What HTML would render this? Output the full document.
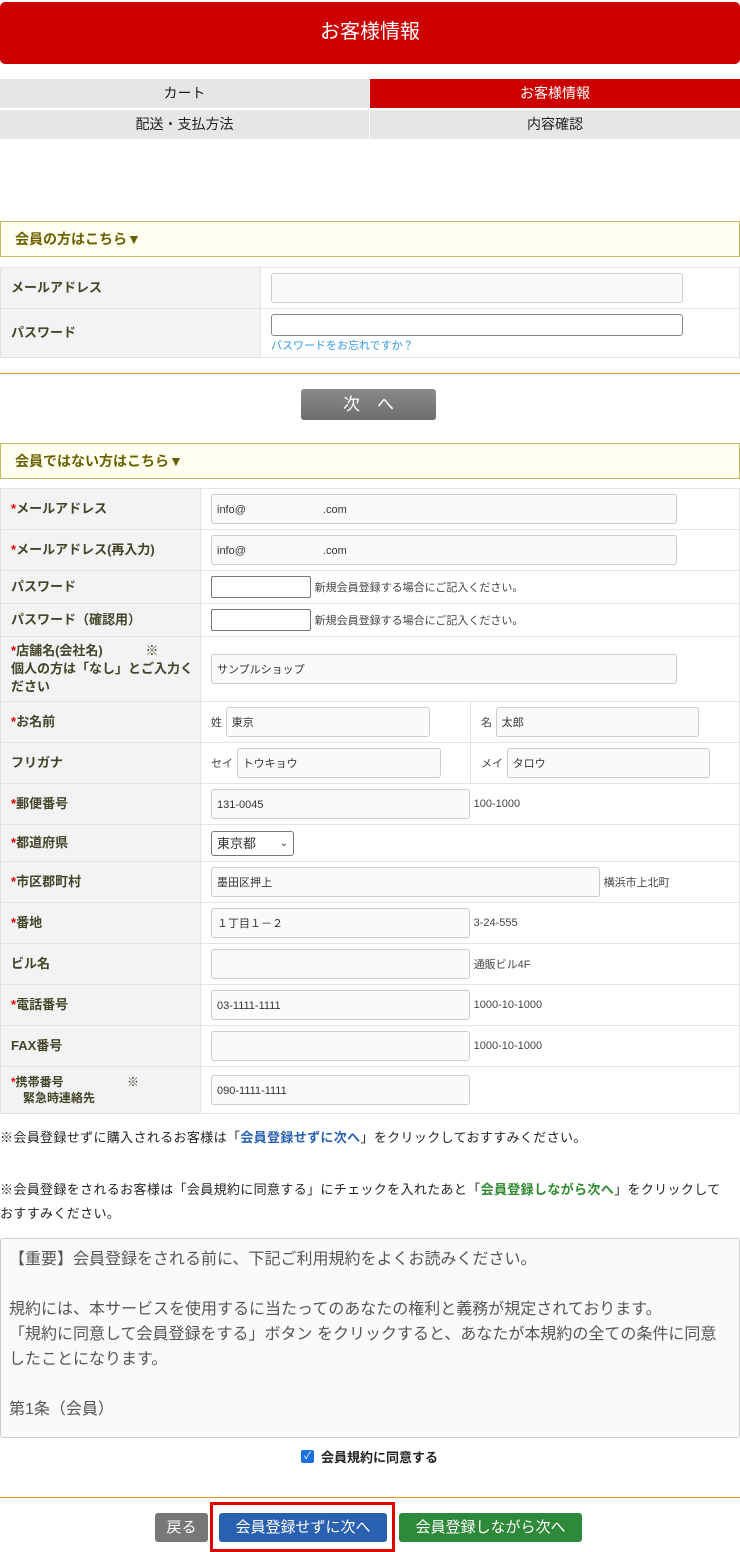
<!DOCTYPE html>
<html><head><meta charset="utf-8"><style>
*{box-sizing:border-box;margin:0;padding:0}
body{width:740px;height:1552px;background:#fff;font-family:"Liberation Sans","Noto Sans CJK JP",sans-serif;position:relative;overflow:hidden;color:#333}
.hdr{position:absolute;left:0;top:2px;width:740px;height:62px;background:#cc0000;border-radius:5px;color:#fff;font-size:20px;text-align:center;line-height:60px}
.tab{position:absolute;height:29px;background:#e6e6e6;font-size:14px;text-align:center;line-height:29px;color:#222}
.sec{position:absolute;left:0;width:740px;height:36px;background:#fffff0;border:1px solid #c8bb66;color:#6b5f00;font-weight:bold;font-size:14px;line-height:34px;padding-left:14px}
table{position:absolute;left:0;width:740px;border-collapse:collapse}
td{border:1px solid #e3e3e3;font-size:13px;vertical-align:middle}
td.l{background:#f3f3f3;font-weight:bold;color:#44442a;padding-left:10px;width:200px;line-height:18px}
td.r{padding-left:10px;background:#fff}
.in{display:inline-block;vertical-align:middle;height:30px;border:1px solid #ccc;border-radius:3px;background:#fafafa;font-size:11px;line-height:30px;padding-left:5px;color:#333}
.pw{display:inline-block;vertical-align:middle;width:100px;height:22px;border:1px solid #777;border-radius:2px;background:#fff}
.note{font-size:11px;color:#444;vertical-align:middle}
.req{color:#d00}
.p{position:absolute;left:0;font-size:13px;color:#222;width:740px;line-height:24px;letter-spacing:0.35px}
.btn{position:absolute;height:29px;color:#fff;font-size:15px;text-align:center;line-height:29px;border-radius:3px}
</style></head><body>
<div class="hdr">お客様情報</div>
<div class="tab" style="left:0;top:79px;width:369px">カート</div>
<div class="tab" style="left:370px;top:79px;width:370px;background:#cc0000;color:#fff">お客様情報</div>
<div class="tab" style="left:0;top:110px;width:369px">配送・支払方法</div>
<div class="tab" style="left:370px;top:110px;width:370px">内容確認</div>

<div class="sec" style="top:221px">会員の方はこちら▼</div>
<table style="top:267px">
<tr style="height:41px"><td class="l" style="width:260px">メールアドレス</td><td class="r"><span class="in" style="width:412px"></span></td></tr>
<tr style="height:49px"><td class="l">パスワード</td><td class="r" style="padding-top:5px;vertical-align:top"><span class="in" style="width:412px;height:22px;border-color:#888;background:#fff"></span><div style="font-size:11px;color:#3399ee;margin-top:1px">パスワードをお忘れですか？</div></td></tr>
</table>
<div style="position:absolute;left:0;top:373px;width:740px;height:1px;background:#e09030"></div>
<div class="btn" style="left:301px;top:389px;width:135px;height:31px;background:linear-gradient(#8a8a8a,#6e6e6e);font-size:17px;line-height:31px">次　へ</div>

<div class="sec" style="top:443px">会員ではない方はこちら▼</div>
<table style="top:488px">
<tr style="height:41px"><td class="l"><span class="req">*</span>メールアドレス</td><td class="r" colspan="2"><span class="in" style="width:466px">info@　　　　　　　.com</span></td></tr>
<tr style="height:41px"><td class="l"><span class="req">*</span>メールアドレス(再入力)</td><td class="r" colspan="2"><span class="in" style="width:466px">info@　　　　　　　.com</span></td></tr>
<tr style="height:33px"><td class="l">パスワード</td><td class="r" colspan="2"><span class="pw"></span> <span class="note">新規会員登録する場合にご記入ください。</span></td></tr>
<tr style="height:33px"><td class="l">パスワード（確認用）</td><td class="r" colspan="2"><span class="pw"></span> <span class="note">新規会員登録する場合にご記入ください。</span></td></tr>
<tr style="height:65px"><td class="l"><span class="req">*</span>店舗名(会社名)　　　 ※<br>個人の方は「なし」とご入力く<br>ださい</td><td class="r" colspan="2"><span class="in" style="width:466px">サンプルショップ</span></td></tr>
<tr style="height:41px"><td class="l"><span class="req">*</span>お名前</td><td class="r" style="width:270px;border-right:1px solid #e3e3e3"><span class="note">姓</span> <span class="in" style="width:204px">東京</span></td><td class="r"><span class="note">名</span> <span class="in" style="width:203px">太郎</span></td></tr>
<tr style="height:41px"><td class="l">フリガナ</td><td class="r"><span class="note">セイ</span> <span class="in" style="width:204px">トウキョウ</span></td><td class="r"><span class="note">メイ</span> <span class="in" style="width:203px">タロウ</span></td></tr>
<tr style="height:41px"><td class="l"><span class="req">*</span>郵便番号</td><td class="r" colspan="2"><span class="in" style="width:259px">131-0045</span> <span class="note">100-1000</span></td></tr>
<tr style="height:37px"><td class="l"><span class="req">*</span>都道府県</td><td class="r" colspan="2"><span class="in" style="width:83px;height:25px;line-height:23px;font-size:13px;border-color:#777;background:#fff">東京都 <span style="float:right;margin-right:5px;font-size:10px">⌄</span></span></td></tr>
<tr style="height:41px"><td class="l"><span class="req">*</span>市区郡町村</td><td class="r" colspan="2"><span class="in" style="width:389px">墨田区押上</span> <span class="note">横浜市上北町</span></td></tr>
<tr style="height:41px"><td class="l"><span class="req">*</span>番地</td><td class="r" colspan="2"><span class="in" style="width:259px">１丁目１－２</span> <span class="note">3-24-555</span></td></tr>
<tr style="height:41px"><td class="l">ビル名</td><td class="r" colspan="2"><span class="in" style="width:259px"></span> <span class="note">通販ビル4F</span></td></tr>
<tr style="height:41px"><td class="l"><span class="req">*</span>電話番号</td><td class="r" colspan="2"><span class="in" style="width:259px">03-1111-1111</span> <span class="note">1000-10-1000</span></td></tr>
<tr style="height:41px"><td class="l">FAX番号</td><td class="r" colspan="2"><span class="in" style="width:259px"></span> <span class="note">1000-10-1000</span></td></tr>
<tr style="height:47px"><td class="l" style="font-size:12px;line-height:16px"><span class="req">*</span>携帯番号　　　　　 ※<br>　緊急時連絡先</td><td class="r" colspan="2"><span class="in" style="width:259px">090-1111-1111</span></td></tr>
</table>

<div class="p" style="top:1126px">※会員登録せずに購入されるお客様は「<b style="color:#2a62b0">会員登録せずに次へ</b>」をクリックしておすすみください。</div>
<div class="p" style="top:1178px">※会員登録をされるお客様は「会員規約に同意する」にチェックを入れたあと「<b style="color:#2e8a2e">会員登録しながら次へ</b>」をクリックして<br>おすすみください。</div>

<div style="position:absolute;left:0;top:1238px;width:740px;height:200px;border:1px solid #ccc;border-radius:3px;background:#fafafa;font-size:16px;color:#555;line-height:25px;padding:8px 8px">【重要】会員登録をされる前に、下記ご利用規約をよくお読みください。<br><br>規約には、本サービスを使用するに当たってのあなたの権利と義務が規定されております。<br>「規約に同意して会員登録をする」ボタン をクリックすると、あなたが本規約の全ての条件に同意したことになります。<br><br>第1条（会員）</div>

<div style="position:absolute;left:301px;top:1450px;width:13px;height:13px;background:#1a6fe0;border-radius:2px;color:#fff;font-size:10px;line-height:13px;text-align:center">✓</div>
<div style="position:absolute;left:321px;top:1447px;font-size:13px;font-weight:bold;color:#222">会員規約に同意する</div>

<div style="position:absolute;left:0;top:1497px;width:740px;height:1px;background:#e09030"></div>
<div class="btn" style="left:155px;top:1513px;width:53px;background:#777">戻る</div>
<div style="position:absolute;left:210px;top:1502px;width:185px;height:50px;border:3px solid #e00000"></div>
<div class="btn" style="left:219px;top:1513px;width:168px;background:#2a60b0">会員登録せずに次へ</div>
<div class="btn" style="left:399px;top:1513px;width:183px;background:#2e8a3a">会員登録しながら次へ</div>
</body></html>
